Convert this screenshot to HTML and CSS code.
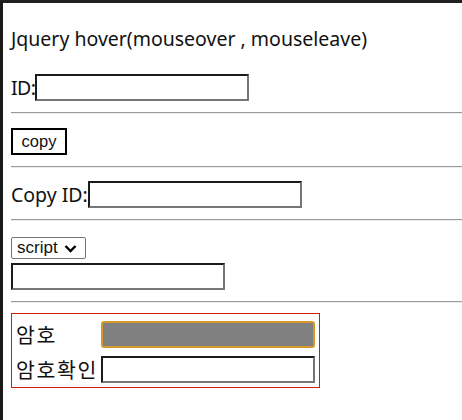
FILE: index.html
```html
<!DOCTYPE html>
<html lang="ko">
<head>
<meta charset="utf-8">
<title>Jquery hover</title>
<link rel="stylesheet" href="styles.css">
</head>
<body>
<div class="frame">
  <div class="title">Jquery hover(mouseover , mouseleave)</div>
  <div class="field first"><span class="label">ID:</span><span class="box"></span></div>
  <div class="rule"></div>
  <div class="btn">copy</div>
  <div class="rule"></div>
  <div class="field second"><span class="label">Copy ID:</span><span class="box"></span></div>
  <div class="rule"></div>
  <div class="select"><span>script</span><svg width="13" height="9" viewBox="0 0 13 9"><path d="M1.5 2 L6.5 7 L11.5 2" fill="none" stroke="#000" stroke-width="2.4"/></svg></div>
  <span class="box solo"></span>
  <div class="rule"></div>
  <div class="pwbox">
    <span class="klabel">암호</span><span class="box focus"></span>
    <span class="klabel">암호확인</span><span class="box"></span>
  </div>
</div>
</body>
</html>
```

FILE: styles.css
```css
html, body { margin: 0; padding: 0; background: #fff; }
.frame {
  border-top: 3px solid #202020;
  border-left: 3px solid #1a1a1a;
  padding: 8px 0 0 8px;
  min-height: 420px;
  box-sizing: border-box;
  font-family: "Noto Sans", "Noto Sans CJK KR", sans-serif;
  font-size: 19.5px;
  color: #111;
  display: flex;
  flex-direction: column;
  align-items: flex-start;
}
.title { margin-top: 16px; line-height: 24px; height: 24px; }
.field { display: flex; align-items: center; height: 27px; }
.field.first { margin-top: 23px; }
.field.second { margin-top: 13px; }
.label { line-height: 27px; }
.field.first .label { letter-spacing: -0.6px; }
.box {
  display: block;
  width: 214px; height: 27px;
  box-sizing: border-box;
  border: 2px solid;
  border-color: #1b1b1b #767676 #767676 #1b1b1b;
  background: #fff;
}
.rule {
  align-self: stretch;
  height: 0;
  border-top: 1px solid #9a9a9a;
  border-bottom: 1px solid #ededed;
  margin-top: 11px;
}
.btn {
  margin-top: 14px;
  width: 56px; height: 27px; box-sizing: border-box;
  border: 2px solid #000;
  font-family: "Liberation Sans", Arial, sans-serif;
  font-size: 16.5px;
  display: flex; align-items: center; justify-content: center;
  color: #111;
}
.select {
  margin-top: 16px;
  width: 75px; height: 22px; box-sizing: border-box;
  border: 1px solid #767676;
  border-radius: 2px;
  font-family: "Liberation Sans", Arial, sans-serif;
  font-size: 17px;
  display: flex; align-items: center; gap: 6px;
  padding-left: 5px;
  color: #111;
}
.box.solo { margin-top: 4px; }
.pwbox {
  margin-top: 10px;
  width: 309px; box-sizing: border-box;
  border: 1px solid rgb(210, 30, 0);
  padding: 7px 4px 4px 4px;
  display: grid;
  grid-template-columns: 85px 214px;
  row-gap: 8px;
  align-items: center;
}
.klabel {
  font-family: "Noto Sans CJK KR", sans-serif;
  font-size: 20.5px;
  letter-spacing: 1.6px;
  line-height: 27px;
}
.box.focus {
  background: #808080;
  border: 2px solid #d69a2c;
  border-radius: 3px;
}
```
